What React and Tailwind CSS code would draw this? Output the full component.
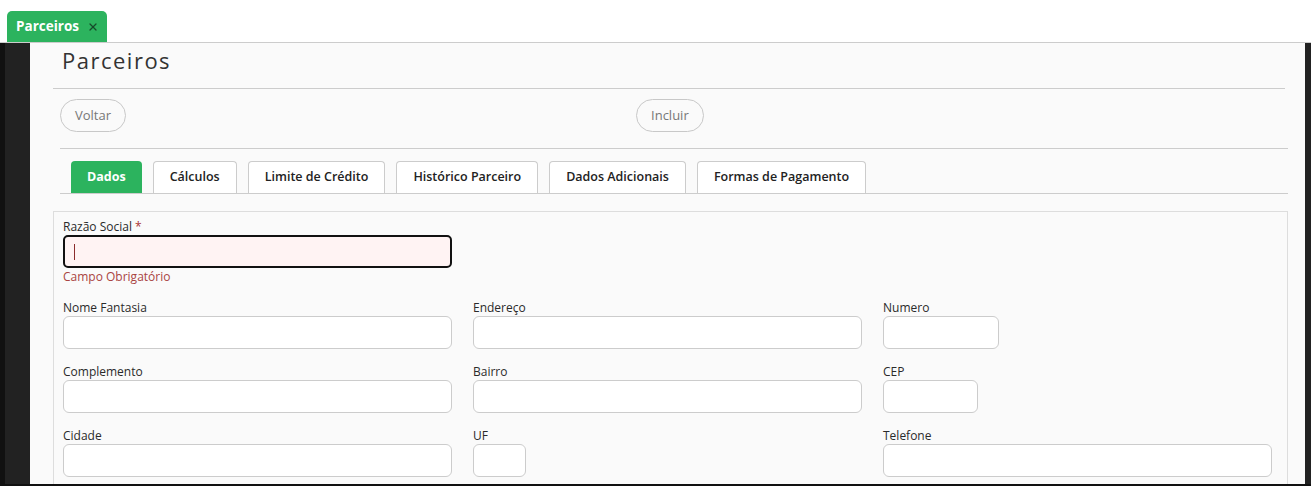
import { X } from 'lucide-react';

const FONT = { fontFamily: '"Open Sans", "Noto Sans", sans-serif' };

function Field({ label, width = 'w-[389px]', required, error }) {
  return (
    <div className="flex flex-col">
      <label className="text-[12px] leading-[16px] text-[#2a2a2a] h-[16px]">
        {label}
        {required && <span className="text-[#a33]"> *</span>}
      </label>
      {error ? (
        <div className="h-[33px] w-[389px] rounded-[5px] border-2 border-[#111] bg-[#fff3f3] flex items-center pl-[9px]">
          <span className="w-px h-[16px] bg-[#8b2c2c]" />
        </div>
      ) : (
        <div className={`h-[33px] ${width} rounded-[6px] border border-[#ccc] bg-white`} />
      )}
      {error && <span className="text-[12px] leading-[16px] mt-[1px] text-[#a94442]">{error}</span>}
    </div>
  );
}

const TABS = ['Dados', 'Cálculos', 'Limite de Crédito', 'Histórico Parceiro', 'Dados Adicionais', 'Formas de Pagamento'];

export default function App() {
  return (
    <div className="w-[1311px] h-[486px] bg-white overflow-hidden flex flex-col" style={FONT}>
      <div className="h-[42px] shrink-0 flex items-end pl-[7px]">
        <div className="h-[31px] w-[100px] bg-[#2cb35e] rounded-t-[5px] flex items-center pl-[9px] gap-[8px] text-white text-[13.5px] font-bold">
          Parceiros
          <X size={12} strokeWidth={2.5} className="text-[#164a2a]" />
        </div>
      </div>

      <div className="flex-1 flex border-t border-[#ccc] min-h-0">
        <div className="w-[5px] bg-[#111]" />
        <div className="w-[25px] bg-[#222]" />
        <div className="flex-1 bg-[#fafafa] pl-[23px] pr-[17px] min-w-0">
          <h1 className="h-[45px] pl-[9px] pt-[1px] text-[22px] tracking-[1.5px] text-[#333] font-normal">Parceiros</h1>
          <div className="border-t border-[#ccc] w-[1232px]" />
          <div className="flex items-start h-[59px] pl-[7px] pt-[10px]">
            <button className="h-[33px] px-[14px] rounded-full border border-[#c8c8c8] text-[13px] text-[#777]">Voltar</button>
            <button className="ml-[510px] h-[33px] px-[14px] rounded-full border border-[#c8c8c8] text-[13px] text-[#777]">Incluir</button>
          </div>
          <div className="ml-[7px] border-t border-[#ccc]" />
          <div className="ml-[7px] mt-[12px] flex gap-[11px] pl-[11px] border-b border-[#ccc]">
            {TABS.map((t, i) => (
              <div
                key={t}
                className={
                  i === 0
                    ? 'h-[32px] px-[16px] flex items-center rounded-t-[4px] bg-[#2cb35e] text-white text-[12.5px] font-bold'
                    : 'h-[32px] px-[16px] flex items-center rounded-t-[4px] border border-b-0 border-[#ccc] bg-white text-[#222] text-[12.5px] font-semibold'
                }
              >
                {t}
              </div>
            ))}
          </div>
          <div className="mt-[17px] border border-[#ddd] bg-[#fafafa] h-[300px] pl-[9px] pt-[7px]">
            <Field label="Razão Social" required error="Campo Obrigatório" />
            <div className="grid grid-cols-[389px_389px_389px] gap-x-[21px] gap-y-[15px] mt-[15px]">
              <Field label="Nome Fantasia" />
              <Field label="Endereço" />
              <Field label="Numero" width="w-[116px]" />
              <Field label="Complemento" />
              <Field label="Bairro" />
              <Field label="CEP" width="w-[95px]" />
              <Field label="Cidade" />
              <Field label="UF" width="w-[53px]" />
              <Field label="Telefone" />
            </div>
          </div>
        </div>
        <div className="w-[6px] bg-[#222]" />
      </div>
      <div className="h-[2px] bg-[#111] shrink-0" />
    </div>
  );
}
